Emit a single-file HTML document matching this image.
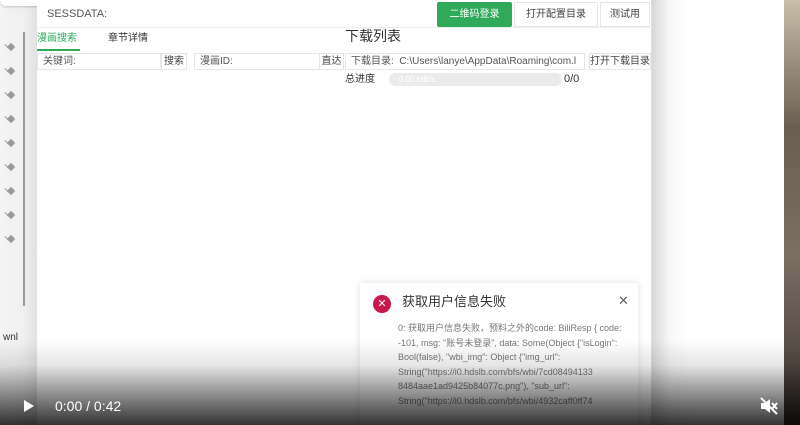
<!DOCTYPE html>
<html><head><meta charset="utf-8"><style>
*{margin:0;padding:0;box-sizing:border-box}
body{width:800px;height:425px;overflow:hidden;position:relative;background:#fff;font-family:"Liberation Sans","Noto Sans CJK SC",sans-serif;color:#333}
.abs{position:absolute;line-height:1.2}
.left{left:0;top:0;width:37px;height:425px;background:linear-gradient(90deg,#f4f4f4 0,#f0f0f0 60%,#e2e2e2 100%)}
.pin{position:absolute;left:8px;width:6px;height:6px;background:#999;border-radius:1px;transform:rotate(45deg)}
.pin:after{content:"";position:absolute;left:-3px;top:5px;width:5px;height:1px;background:#999}
.app{left:37px;top:0;width:615px;height:425px;background:#fff;border-right:1px solid #ddd}
.box{position:absolute;border:1px solid #e6e6e6;background:#fff;font-size:10px;color:#555;line-height:15px;padding-left:5px}
.btn{position:absolute;border:1px solid #e6e6e6;background:#fff;font-size:10px;color:#444;text-align:center;line-height:15px}
.rightw{left:652px;top:0;width:132px;height:425px;background:linear-gradient(90deg,#d8d8d8 0,#f8f8f8 18px,#fff 40px)}
.dark{left:784px;top:0;width:16px;height:425px;background:linear-gradient(180deg,#c9bfa8 0,#6a5e52 30%,#7b6e63 60%,#3a3430 100%)}
.shade{left:0;top:340px;width:800px;height:85px;background:linear-gradient(180deg,rgba(0,0,0,0) 0,rgba(0,0,0,.1) 30%,rgba(0,0,0,.5) 70%,rgba(0,0,0,.8) 100%)}
</style></head><body>
<div class="abs left">
 <div class="abs" style="left:23px;top:32px;width:2px;height:274px;background:#999"></div>
 <div class="pin" style="top:44px"></div>
 <div class="pin" style="top:68px"></div>
 <div class="pin" style="top:92px"></div>
 <div class="pin" style="top:116px"></div>
 <div class="pin" style="top:140px"></div>
 <div class="pin" style="top:164px"></div>
 <div class="pin" style="top:188px"></div>
 <div class="pin" style="top:212px"></div>
 <div class="pin" style="top:236px"></div>
 <div class="abs" style="left:3px;top:332px;font-size:10px;color:#333">wnl</div>
</div>
<div class="abs" style="left:0;top:0;width:170px;height:6px;background:#fff;border-radius:0 0 6px 6px;box-shadow:0 1px 2px rgba(0,0,0,.2)"></div>
<div class="abs app">
 <div class="abs" style="left:10px;top:8px;font-size:11px;color:#555">SESSDATA:</div>
 <div class="abs" style="left:400px;top:2px;width:75px;height:25px;background:#2eaa58;color:#fff;font-size:10px;text-align:center;line-height:25px;border-radius:2px">二维码登录</div>
 <div class="btn" style="left:477px;top:2px;width:84px;height:25px;line-height:24px">打开配置目录</div>
 <div class="btn" style="left:563px;top:2px;width:50px;height:25px;line-height:24px">测试用</div>
 <div class="abs" style="left:0;top:27px;width:615px;height:1px;background:#eee"></div>
 <div class="abs" style="left:0;top:33px;font-size:10px;color:#2eaa58">漫画搜索</div>
 <div class="abs" style="left:0;top:49px;width:43px;height:2px;background:#2eaa58"></div>
 <div class="abs" style="left:71px;top:33px;font-size:10px;color:#333">章节详情</div>
 <div class="abs" style="left:308px;top:28px;font-size:14px;color:#333">下载列表</div>
 <div class="box" style="left:0;top:53px;width:124px;height:17px">关键词:</div>
 <div class="btn" style="left:124px;top:53px;width:26px;height:17px">搜索</div>
 <div class="box" style="left:157px;top:53px;width:127px;height:17px">漫画ID:</div>
 <div class="btn" style="left:282px;top:53px;width:25px;height:17px">直达</div>
 <div class="box" style="left:308px;top:53px;width:240px;height:17px;white-space:nowrap;overflow:hidden">下载目录:&nbsp; C:\Users\lanye\AppData\Roaming\com.l</div>
 <div class="btn" style="left:552px;top:53px;width:62px;height:17px">打开下载目录</div>
 <div class="abs" style="left:308px;top:74px;font-size:10px;color:#333">总进度</div>
 <div class="abs" style="left:352px;top:73px;width:173px;height:13px;background:#ebebeb;border-radius:7px;font-size:8px;color:#fff;padding-left:10px;line-height:13px">0.00 MB/s</div>
 <div class="abs" style="left:527px;top:73px;font-size:11px;color:#333">0/0</div>
</div>
<div class="abs rightw"></div>
<div class="abs dark"></div>
<div class="abs" style="left:360px;top:283px;width:278px;height:142px;background:#fff;box-shadow:0 0 8px rgba(0,0,0,.12)">
 <div class="abs" style="left:13px;top:12px;width:18px;height:18px;border-radius:50%;background:#c8174a;color:#fff;font-size:11px;text-align:center;line-height:18px">✕</div>
 <div class="abs" style="left:42px;top:11px;font-size:13px;color:#333">获取用户信息失败</div>
 <div class="abs" style="left:258px;top:10px;font-size:13px;color:#666">✕</div>
 <div class="abs" style="left:38px;top:38px;width:232px;font-size:9px;line-height:14.5px;color:#777;word-break:normal;overflow-wrap:anywhere">0: 获取用户信息失败，预料之外的code: BiliResp { code: -101, msg: "账号未登录", data: Some(Object {"isLogin": Bool(false), "wbi_img": Object {"img_url": String("https://i0.hdslb.com/bfs/wbi/7cd08494133 8484aae1ad9425b84077c.png"), "sub_url": String("https://i0.hdslb.com/bfs/wbi/4932caff0ff74</div>
</div>
<div class="abs shade"></div>
<div class="abs" style="left:24px;top:400px;width:0;height:0;border-left:10px solid #fff;border-top:6px solid transparent;border-bottom:6px solid transparent"></div>
<div class="abs" style="left:55px;top:398px;font-size:14px;color:#fff">0:00 / 0:42</div>
<svg class="abs" style="left:759px;top:396px" width="20" height="20" viewBox="0 0 20 20"><path d="M2 7h4l5-4v14l-5-4H2z" fill="#fff"/><path d="M13 7l5 6M18 7l-5 6" stroke="#fff" stroke-width="2"/><path d="M2 2l16 16" stroke="#fff" stroke-width="2"/></svg>
</body></html>
